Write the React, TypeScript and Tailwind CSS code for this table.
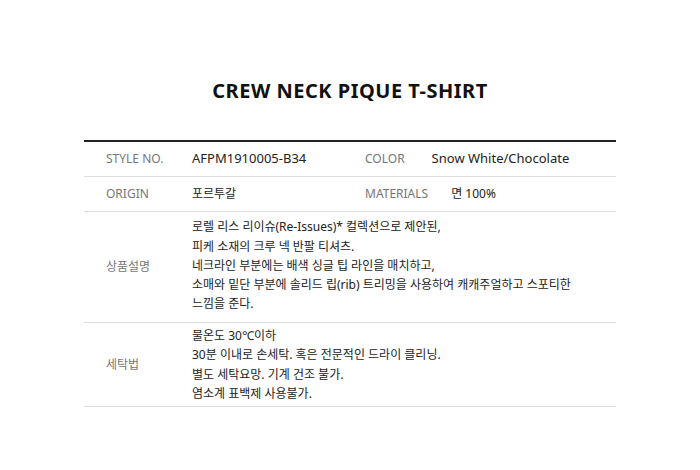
const font = { fontFamily: '"Noto Sans", "Noto Sans CJK KR", sans-serif' }

const desc = [
  '로렐 리스 리이슈(Re-Issues)* 컬렉션으로 제안된,',
  '피케 소재의 크루 넥 반팔 티셔츠.',
  '네크라인 부분에는 배색 싱글 팁 라인을 매치하고,',
  '소매와 밑단 부분에 솔리드 립(rib) 트리밍을 사용하여 캐캐주얼하고 스포티한',
  '느낌을 준다.',
]

const wash = [
  '물온도 30℃이하',
  '30분 이내로 손세탁. 혹은 전문적인 드라이 클리닝.',
  '별도 세탁요망. 기계 건조 불가.',
  '염소계 표백제 사용불가.',
]

function Label({ children }: { children: React.ReactNode }) {
  return <div className="w-[108px] shrink-0 pl-[22px] text-[12px] text-[#777]">{children}</div>
}

function Lines({ lines }: { lines: string[] }) {
  return (
    <div className="text-[12px] leading-[19.3px] text-[#222]">
      {lines.map((l) => (
        <div key={l}>{l}</div>
      ))}
    </div>
  )
}

export default function App() {
  return (
    <div className="flex h-[470px] w-[700px] flex-col bg-white" style={font}>
      <h1 className="pt-[76px] text-center text-[20px] font-bold tracking-[0.5px] text-[#111]" style={{ fontFamily: '"Noto Sans", sans-serif' }}>
        CREW NECK PIQUE T-SHIRT
      </h1>
      <div className="mx-[84px] mt-[34px] border-t-[2px] border-[#222]">
        <div className="flex h-[35px] items-center border-b border-[#ddd]">
          <Label>STYLE NO.</Label>
          <div className="w-[173px] text-[13px] text-[#222]">AFPM1910005-B34</div>
          <div className="flex items-center gap-[27px]">
            <span className="text-[12px] text-[#777]">COLOR</span>
            <span className="text-[13px] text-[#222]">Snow White/Chocolate</span>
          </div>
        </div>
        <div className="flex h-[35px] items-center border-b border-[#ddd]">
          <Label>ORIGIN</Label>
          <div className="w-[173px] text-[12px] text-[#222]">포르투갈</div>
          <div className="flex items-center gap-[23px]">
            <span className="text-[12px] text-[#777]">MATERIALS</span>
            <span className="text-[12px] text-[#222]">면 100%</span>
          </div>
        </div>
        <div className="flex h-[111px] items-center border-b border-[#ddd]">
          <Label>상품설명</Label>
          <div className="pb-[3px]">
            <Lines lines={desc} />
          </div>
        </div>
        <div className="flex h-[84px] items-center border-b border-[#ddd]">
          <Label>세탁법</Label>
          <Lines lines={wash} />
        </div>
      </div>
    </div>
  )
}
